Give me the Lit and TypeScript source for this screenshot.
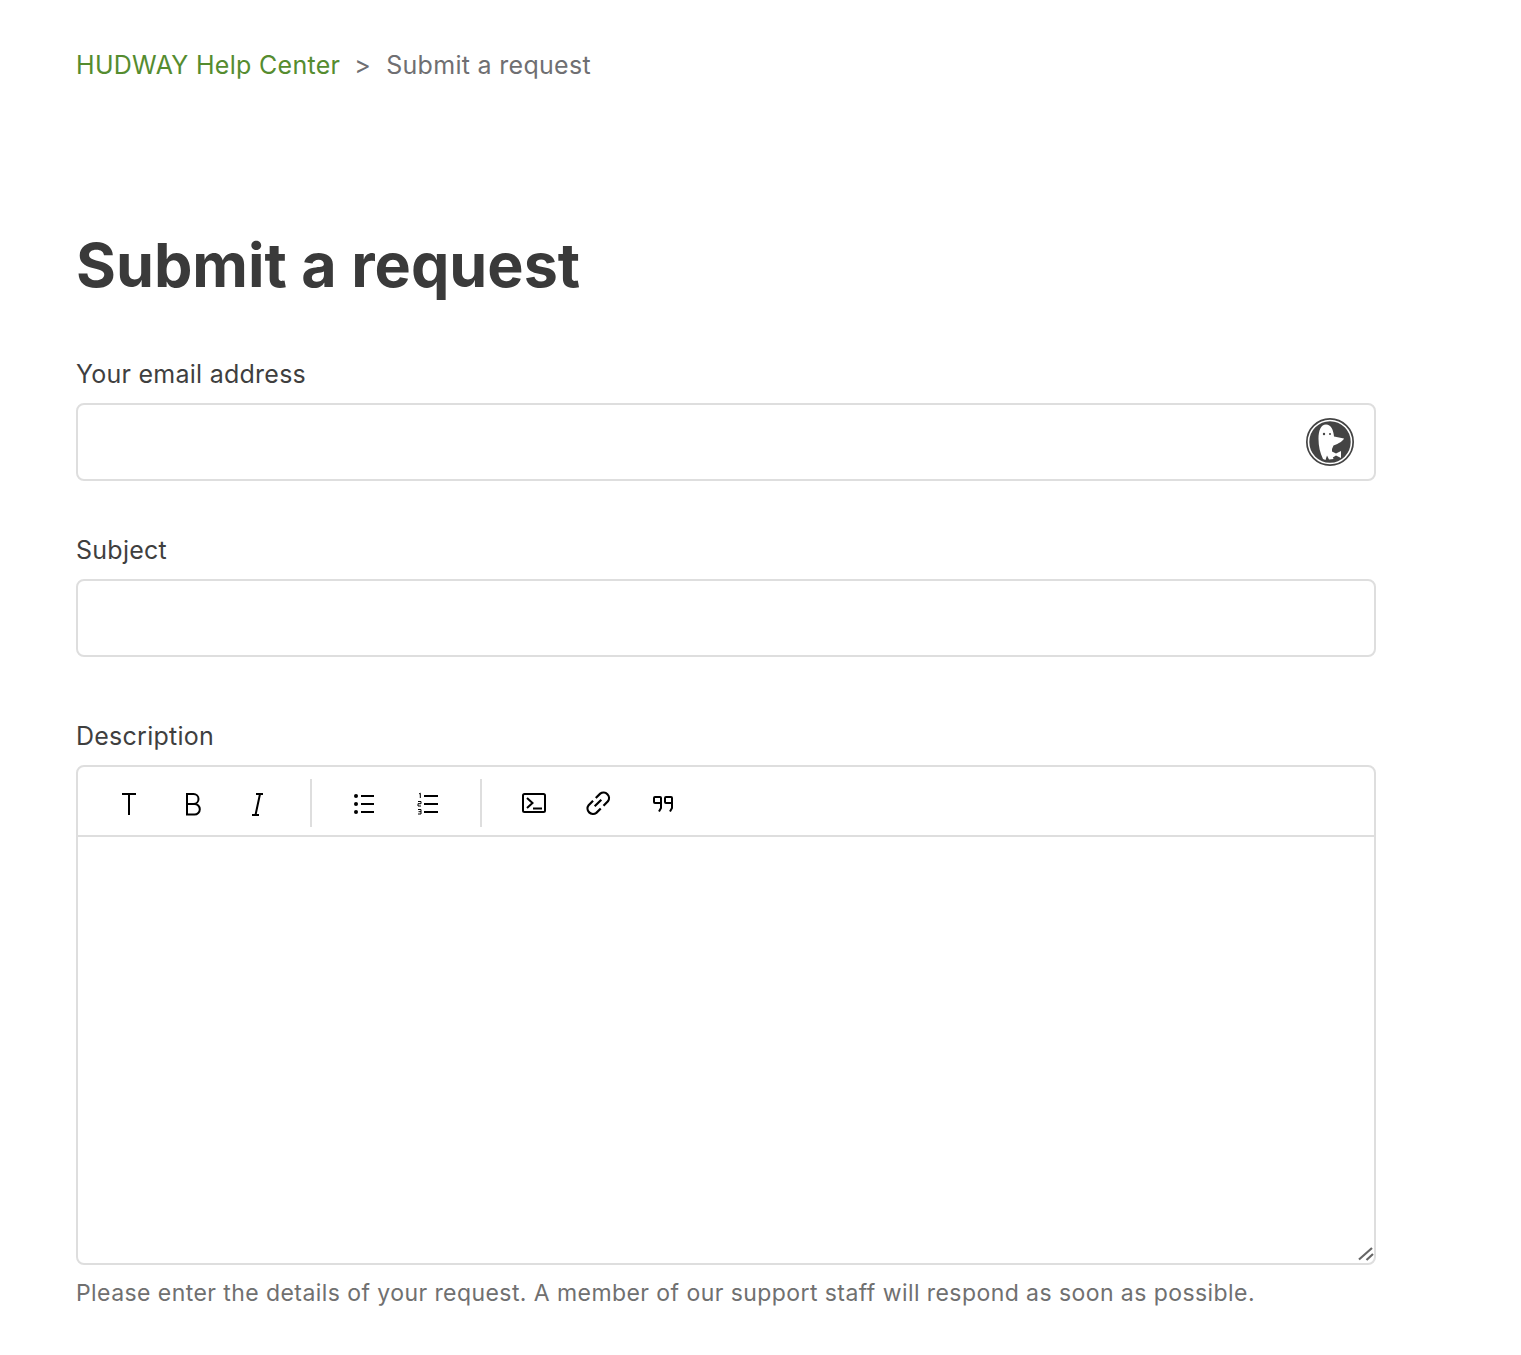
import { LitElement, html, css, svg } from "lit";
import { customElement } from "lit/decorators.js";

@customElement("app-root")
export class AppRoot extends LitElement {
  static styles = css`
    :host { display: block; height: 1355px; overflow: hidden; background: #fff; font-family: Inter, "Liberation Sans", sans-serif; color: #3a3a3a; }
    .page { padding: 48px 145px 0 76px; }
    .crumbs { display: flex; align-items: center; height: 34px; font-size: 25px; letter-spacing: 0.3px; color: #6f6f72; }
    .crumbs a { color: #558c2f; text-decoration: none; }
    .sep { margin: 0 15px 0 14px; }
    h1 { margin: 147px 0 0; font-size: 61px; line-height: 72px; font-weight: 700; color: #3a3a3a; }
    .field { display: flex; flex-direction: column; }
    .label { font-size: 25px; line-height: 32px; letter-spacing: 0.25px; color: #3f3f3f; margin-bottom: 13px; }
    .email { margin-top: 57px; }
    .subject { margin-top: 53px; }
    .desc { margin-top: 63px; }
    .input { box-sizing: border-box; height: 78px; border: 2px solid #dedede; border-radius: 8px; display: flex; align-items: center; justify-content: flex-end; padding-right: 20px; background: #fff; }
    .duck { width: 48px; height: 48px; display: block; }
    .editor { box-sizing: border-box; height: 500px; border: 2px solid #dedede; border-radius: 8px; display: flex; flex-direction: column; position: relative; }
    .toolbar { box-sizing: border-box; height: 70px; border-bottom: 2px solid #dedede; display: flex; align-items: flex-start; padding: 12px 0 0 18px; }
    .group { display: flex; }
    .btn { width: 64px; height: 48px; display: flex; align-items: center; justify-content: center; }
    .btn svg { width: 32px; height: 32px; display: block; }
    .divider { width: 2px; height: 48px; background: #dedede; margin: 0 19px 0 22px; }
    .divider.b { margin: 0 20px 0 21px; }
    .grip { position: absolute; right: -2px; bottom: -2px; width: 18px; height: 18px; display: block; }
    .hint { margin: 12px 0 0; font-size: 23px; line-height: 32px; letter-spacing: 0.43px; color: #707070; white-space: nowrap; }
  `;

  private icon(body: unknown) {
    return html`<span class="btn"><svg viewBox="0 0 32 32" fill="none" stroke="#000" stroke-width="2">${body}</svg></span>`;
  }

  render() {
    return html`
      <div class="page">
        <nav class="crumbs"><a href="#">HUDWAY Help Center</a><span class="sep">&gt;</span><span>Submit a request</span></nav>
        <h1>Submit a request</h1>
        <div class="field email">
          <span class="label">Your email address</span>
          <div class="input">
            <svg class="duck" viewBox="0 0 48 48">
              <circle cx="24" cy="24" r="23" fill="#444" stroke="#444" stroke-width="2"/>
              <circle cx="24" cy="24" r="21.500" fill="none" stroke="#fff" stroke-width="1.600"/>
              <path d="M12.500 21C12.500 12 15 6.500 20 6.500 25 6.500 27.500 12 28 18.500L38 20.500C37 23 33 25.500 27.500 27.500L26 31 26 37 27.500 41 23 41.500 21 37.500 19.500 42 17 41C14 35 12.500 28 12.500 21Z" fill="#fff"/>
              <circle cx="18" cy="16" r="1.200" fill="#444"/>
              <circle cx="24" cy="16" r="1" fill="#444"/>
              <path d="M26 33.500L30 35.500 35 33 35 40 30 37.500 26 40Z" fill="#fff"/>
            </svg>
          </div>
        </div>
        <div class="field subject">
          <span class="label">Subject</span>
          <div class="input"></div>
        </div>
        <div class="field desc">
          <span class="label">Description</span>
          <div class="editor">
            <div class="toolbar">
              <div class="group">
                ${this.icon(svg`<path d="M10 7h14M17 7v21"/>`)}
                ${this.icon(svg`<path d="M11 7h6.500a5 5 0 0 1 0 10h-6.500zM11 17h7.500a5.300 5.300 0 0 1 0 10.600h-7.500z"/>`)}
                ${this.icon(svg`<path d="M16 7h7M12 28h7M20 7l-4.500 21"/>`)}
              </div>
              <span class="divider"></span>
              <div class="group">
                ${this.icon(svg`<path d="M14 9h13M14 17h13M14 25h13"/><circle cx="9" cy="9" r="2" fill="#000" stroke="none"/><circle cx="9" cy="17" r="2" fill="#000" stroke="none"/><circle cx="9" cy="25" r="2" fill="#000" stroke="none"/>`)}
                ${this.icon(svg`<path d="M13 9h14M13 17h14M13 25h14"/><path d="M8 7l1.300-.8v4.800M7 14.500h3v2.200h-3v2.300h3M7 22.500h3v4.500h-3M7.500 24.700h2.500" stroke-width="1"/>`)}
              </div>
              <span class="divider b"></span>
              <div class="group">
                ${this.icon(svg`<rect x="5" y="7" width="22" height="18" rx="1.500"/><path d="M9 11l5.500 5-5.500 5M15 21.500h9"/>`)}
                ${this.icon(svg`<path transform="translate(16 16) scale(1.1) translate(-16 -16)" d="M13 19l6-6M11.500 14l-4 4a5 5 0 0 0 7 7l4-4M14 11.500l4-4a5 5 0 0 1 7 7l-4 4"/>`)}
                ${this.icon(svg`<path d="M15 13v-2a1 1 0 0 0-1-1h-5a1 1 0 0 0-1 1v4a1 1 0 0 0 1 1h6M15 13v8l-2 3.500M26 13v-2a1 1 0 0 0-1-1h-5a1 1 0 0 0-1 1v4a1 1 0 0 0 1 1h6M26 13v8l-2 3.500"/>`)}
              </div>
            </div>
            <svg class="grip" viewBox="0 0 18 18" fill="none" stroke="#666" stroke-width="2.200">
              <path d="M1 12.500L14 1M8.500 13L15 7"/>
            </svg>
          </div>
        </div>
        <p class="hint">Please enter the details of your request. A member of our support staff will respond as soon as possible.</p>
      </div>
    `;
  }
}
